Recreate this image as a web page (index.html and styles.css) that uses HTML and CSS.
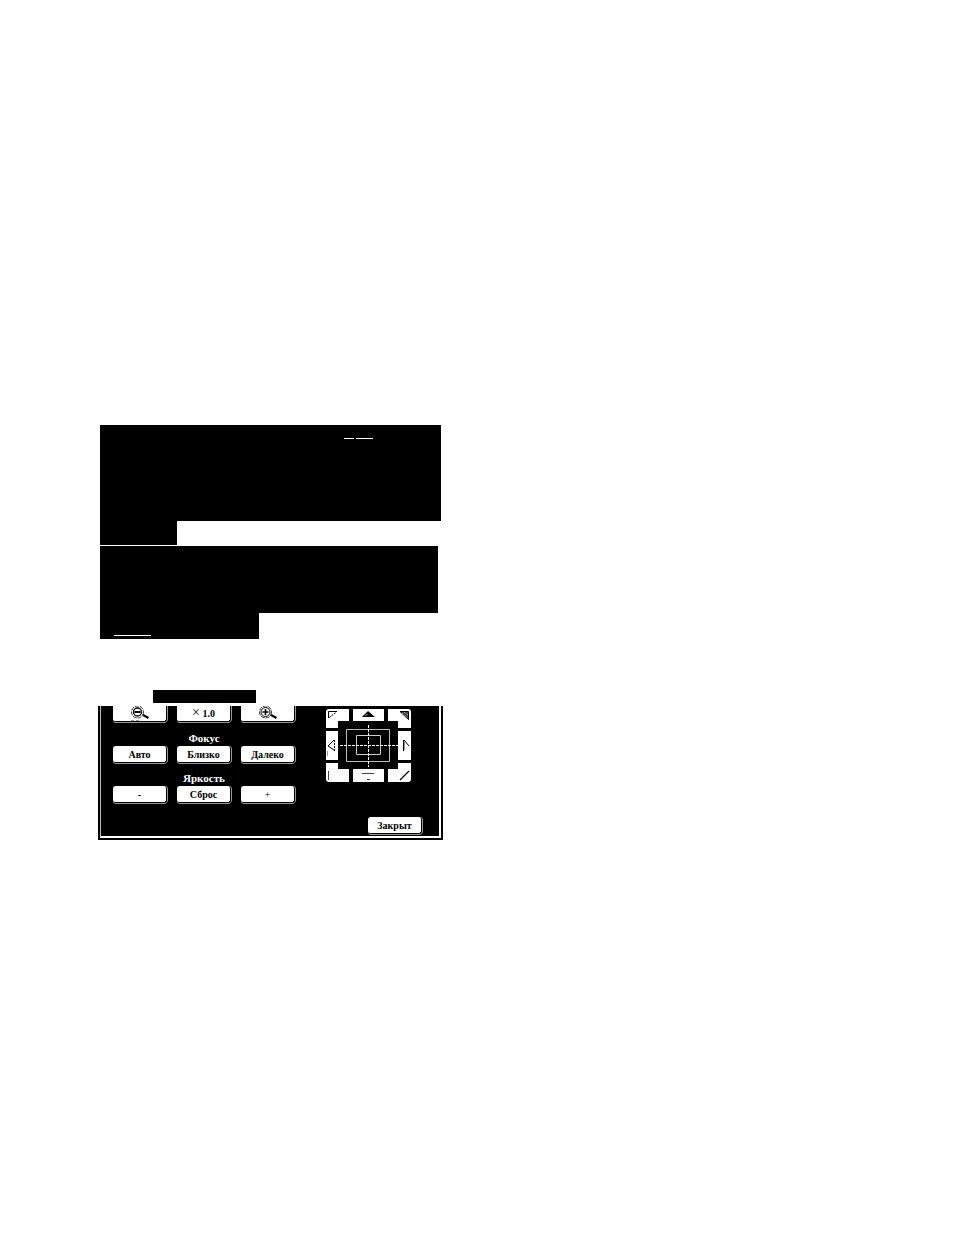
FILE: index.html
```
<!DOCTYPE html>
<html lang="ru">
<head>
  <meta charset="UTF-8">
  <meta name="viewport" content="width=device-width, initial-scale=1.0">
  <title>Управление камерой</title>
  <link rel="stylesheet" href="styles.css">
</head>
<body>
  <main class="container">
    <!-- Закрашенный текст -->
    <div class="block block-first">
      <div class="lines"><span class="underline short"></span><span class="underline"></span></div>
      <div class="tail"></div>
    </div>
    <div class="block block-second">
      <div class="lines"></div>
      <div class="tail"><span class="underline long"></span></div>
    </div>
    <div class="caption"></div>

    <!-- Панель камеры -->
    <section class="panel">
      <div class="panel-inner">
        <div class="panel-top">
          <div class="controls">
            <button class="btn cut" aria-label="Уменьшить">
              <svg width="22" height="16" viewBox="0 0 22 16" fill="none" stroke="#000">
                <circle cx="8.5" cy="6" r="6" stroke="#333" stroke-dasharray="4 1"/>
                <circle cx="8.5" cy="6" r="4" stroke-width="1.3"/>
                <path d="M5.500 6h6" stroke-width="2"/>
                <path d="M14 9l5.500 3" stroke-width="2"/>
                <path d="M2 14.500h8" stroke="#999" stroke-dasharray="3 2"/>
              </svg>
            </button>
            <button class="btn cut"><span class="times">×</span> 1.0</button>
            <button class="btn cut" aria-label="Увеличить">
              <svg width="22" height="16" viewBox="0 0 22 16" fill="none" stroke="#000">
                <circle cx="8.5" cy="6" r="6" stroke="#333" stroke-dasharray="4 1"/>
                <circle cx="8.5" cy="6" r="4.500"/>
                <path d="M5.500 6h6M8.500 3v6" stroke-width="1.600"/>
                <path d="M14 9l5.500 3" stroke-width="2"/>
              </svg>
            </button>
            <h2 class="label">Фокус</h2>
            <button class="btn">Авто</button>
            <button class="btn">Близко</button>
            <button class="btn">Далеко</button>
            <h2 class="label">Яркость</h2>
            <button class="btn">-</button>
            <button class="btn">Сброс</button>
            <button class="btn plus">+</button>
          </div>

          <div class="pad">
            <button class="dir nw" aria-label="Влево вверх">
              <svg width="23" height="19" viewBox="0 0 23 19" fill="none" stroke="#000"><path d="M2.500 9V2.500H11"/><path d="M3 8.500l7-5" stroke-dasharray="2 1"/></svg>
            </button>
            <button class="dir" aria-label="Вверх">
              <svg width="31" height="19" viewBox="0 0 31 19"><path d="M9 8l6-6 7 6z"/><path d="M12 7l3-2" stroke="#888"/></svg>
            </button>
            <button class="dir ne" aria-label="Вправо вверх">
              <svg width="23" height="19" viewBox="0 0 23 19" fill="none" stroke="#000"><path d="M12 2.500h8.500v8z" fill="#444"/><path d="M14 4l6 5M16 3l4 3" stroke="#bbb" stroke-dasharray="1 1"/></svg>
            </button>
            <button class="dir" aria-label="Влево">
              <svg width="23" height="29" viewBox="0 0 23 29" fill="none" stroke="#000"><path d="M8 9l-6 6 6 4"/><path d="M8.500 9v11" stroke-dasharray="2 1"/><path d="M1.500 20v5" stroke="#999"/></svg>
            </button>
            <span class="center"></span>
            <button class="dir" aria-label="Вправо">
              <svg width="23" height="29" viewBox="0 0 23 29" fill="none" stroke="#000"><path d="M15.500 9v11"/><path d="M16 9l5 6"/><path d="M16.500 10v9" stroke="#999"/></svg>
            </button>
            <button class="dir sw" aria-label="Влево вниз">
              <svg width="23" height="19" viewBox="0 0 23 19" fill="none" stroke="#444"><path d="M2.500 8v9"/></svg>
            </button>
            <button class="dir" aria-label="Вниз">
              <svg width="31" height="19" viewBox="0 0 31 19" fill="none" stroke="#444"><path d="M9 10.500h12M14 16.500h3"/></svg>
            </button>
            <button class="dir se" aria-label="Вправо вниз">
              <svg width="23" height="19" viewBox="0 0 23 19" fill="none" stroke="#000" stroke-width="1.300"><path d="M12 17l9-9"/></svg>
            </button>
            <div class="screen">
              <svg width="60" height="48" viewBox="0 0 60 48" fill="none" stroke="#fff">
                <path d="M8.500 8.500h43v32h-43z" stroke="#bbb"/>
                <path d="M18.500 14.500h24v19h-24z" stroke="#ccc"/>
                <path d="M30.500 4v42" stroke-dasharray="3 1"/>
                <path d="M2 24.500h58" stroke-dasharray="3 1"/>
              </svg>
            </div>
          </div>
        </div>
        <div class="panel-bottom">
          <button class="btn close">Закрыт</button>
        </div>
      </div>
    </section>
  </main>
</body>
</html>
```

FILE: styles.css
```
* {
  box-sizing: border-box;
}

body {
  margin: 0;
  background-color: #fff;
  color: #000;
  font-family: "Liberation Serif", "Times New Roman", serif;
}

.container {
  max-width: 541px;
  padding: 425px 98px 40px;
}

.block {
  margin: 0 2px 1px;
}

.lines, .tail {
  background-color: #000;
}

.lines {
  display: flex;
  justify-content: flex-end;
  gap: 2px;
}

.block-first .lines {
  height: 96px;
  padding: 13px 68px 0 0;
}

.block-first .tail {
  width: 77px;
  height: 24px;
}

.block-second .lines {
  height: 67px;
  margin-right: 3px;
}

.block-second .tail {
  width: 159px;
  height: 26px;
  padding: 22px 0 0 14px;
}

.underline {
  display: block;
  width: 17px;
  height: 1px;
  background-color: #fff;
}

.underline.short {
  width: 10px;
}

.underline.long {
  width: 37px;
}

.caption {
  width: 103px;
  height: 13px;
  margin: 51px 0 3px 55px;
  background-color: #000;
}

.panel {
  background-color: #000;
  border: 2px solid #000;
  border-top: none;
}

.panel-inner {
  border: 2px solid #fff;
  border-top: none;
  border-left: 1px solid #bbb;
  padding: 0 0 2px 12px;
}

.panel-top {
  display: flex;
  gap: 31px;
}

.controls {
  display: grid;
  grid-template-columns: repeat(3, 54px);
  column-gap: 10px;
}

.label {
  grid-column: 1 / -1;
  margin: 0;
  padding: 8px 0 1px;
  color: #fff;
  font-size: 11px;
  line-height: 14px;
  text-align: center;
}

.btn {
  width: 54px;
  height: 17px;
  padding: 0;
  border: 0 solid #000;
  border-width: 0 1px 1px 0;
  border-radius: 3px;
  background-color: #fff;
  box-shadow: 0 1px #999, 1px 0 #999;
  color: #000;
  font-family: inherit;
  font-size: 10px;
  font-weight: bold;
  line-height: 15px;
  text-align: center;
}

.btn.cut {
  height: 16px;
  margin-bottom: 1px;
  border-radius: 0 0 3px 3px;
  overflow: hidden;
}

.btn.plus {
  font-weight: normal;
}

.times {
  font-size: 14px;
  font-weight: normal;
  line-height: 10px;
}

.btn svg, .dir svg {
  display: block;
  margin: 0 auto;
}

.pad {
  display: grid;
  grid-template-columns: 23px 31px 23px;
  grid-template-rows: 19px 29px 19px;
  column-gap: 4px;
  row-gap: 3px;
  position: relative;
  align-self: start;
  margin-top: 3px;
}

.dir {
  padding: 0;
  border: none;
  background-color: #fff;
}

.nw {
  border-top-left-radius: 3px;
}

.ne {
  border-top-right-radius: 3px;
}

.sw {
  border-bottom-left-radius: 3px;
}

.se {
  border-bottom-right-radius: 3px;
}

/* экран поверх кнопок направления */
.screen {
  position: absolute;
  top: 12px;
  left: 12px;
  background-color: #000;
}

.screen svg {
  display: block;
}

.panel-bottom {
  display: flex;
  justify-content: flex-end;
  padding: 14px 17px 0 0;
}
```
